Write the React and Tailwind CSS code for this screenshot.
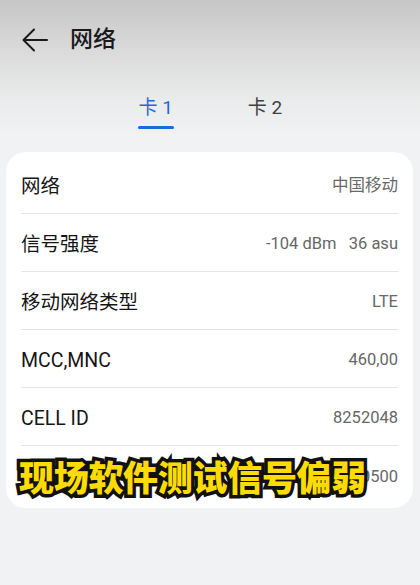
const rows = [
  { label: '网络', value: '中国移动' },
  { label: '信号强度', value: '-104 dBm\u00a0\u00a0\u00a036 asu' },
  { label: '移动网络类型', value: 'LTE' },
  { label: 'MCC,MNC', value: '460,00' },
  { label: 'CELL ID', value: '8252048' },
  { label: 'TAC', value: '10500' },
];

function BackArrow() {
  return (
    <svg width="26" height="24" viewBox="0 0 26 24" fill="none" stroke="#1a1a1a" strokeWidth="2" strokeLinecap="round" strokeLinejoin="round">
      <path d="M25 12H2" />
      <path d="M12 1.5L1.5 12L12 22.5" />
    </svg>
  );
}

export default function App() {
  return (
    <div
      className="relative h-[585px] w-[420px] overflow-hidden bg-[linear-gradient(180deg,#c6c6c6_0px,#dadada_50px,#eaebeb_100px,#f1f2f4_140px,#f1f2f4_100%)]"
      style={{ fontFamily: 'Roboto, "Noto Sans CJK SC", sans-serif' }}
    >
      {/* header */}
      <div className="flex h-[80px] items-center pl-[22px]">
        <BackArrow />
        <h1 className="ml-[22px] text-[23px] font-medium text-[#1a1a1a]">网络</h1>
      </div>

      {/* tabs */}
      <div className="flex justify-center gap-[74px] pt-[16px]">
        <div className="flex flex-col items-center">
          <span className="text-[19px] leading-[24px] text-[#1d6ad8]">卡 1</span>
          <div className="mt-[6px] h-[3px] w-[36px] rounded-full bg-[#1d6ad8]" />
        </div>
        <div className="flex flex-col items-center">
          <span className="text-[19px] leading-[24px] text-[#404040]">卡 2</span>
        </div>
      </div>

      {/* card */}
      <div className="mx-[6px] mt-[23px] w-[407px] rounded-[20px] bg-white px-[15px] py-[4px]">
        {rows.map((r, i) => (
          <div
            key={r.label}
            className={`flex h-[58px] items-center justify-between pt-[4px] ${
              i < rows.length - 1 ? 'border-b border-[#e4e4e4]' : ''
            }`}
          >
            <span className="text-[19.5px] text-[#151515]">{r.label}</span>
            <span className="text-[16.5px] text-[#676767]">{r.value}</span>
          </div>
        ))}
      </div>

      {/* caption overlay */}
      <div
        className="absolute left-[19px] top-[449px] whitespace-nowrap text-[35px] font-black leading-[54px] tracking-[-0.3px] text-[#ffdc00] [-webkit-text-stroke:7px_#111] [paint-order:stroke_fill]"
        style={{ fontFamily: '"Noto Sans CJK SC", sans-serif' }}
      >
        现场软件测试信号偏弱
      </div>
    </div>
  );
}
